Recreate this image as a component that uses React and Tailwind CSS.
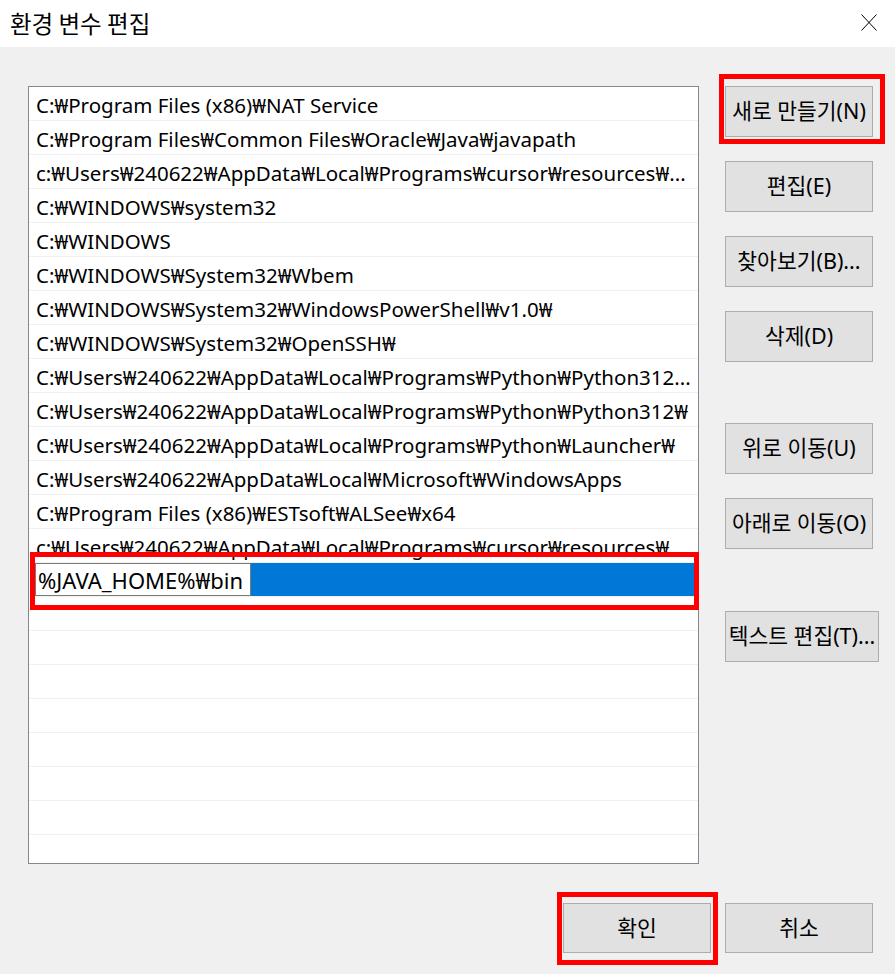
import React from 'react';

const paths = [
  'C:₩Program Files (x86)₩NAT Service',
  'C:₩Program Files₩Common Files₩Oracle₩Java₩javapath',
  'c:₩Users₩240622₩AppData₩Local₩Programs₩cursor₩resources₩...',
  'C:₩WINDOWS₩system32',
  'C:₩WINDOWS',
  'C:₩WINDOWS₩System32₩Wbem',
  'C:₩WINDOWS₩System32₩WindowsPowerShell₩v1.0₩',
  'C:₩WINDOWS₩System32₩OpenSSH₩',
  'C:₩Users₩240622₩AppData₩Local₩Programs₩Python₩Python312...',
  'C:₩Users₩240622₩AppData₩Local₩Programs₩Python₩Python312₩',
  'C:₩Users₩240622₩AppData₩Local₩Programs₩Python₩Launcher₩',
  'C:₩Users₩240622₩AppData₩Local₩Microsoft₩WindowsApps',
  'C:₩Program Files (x86)₩ESTsoft₩ALSee₩x64',
  'c:₩Users₩240622₩AppData₩Local₩Programs₩cursor₩resources₩',
];

const emptyRows = 8;

function Button({ children, wide }) {
  return (
    <div
      className={`h-[51px] ${wide ? 'w-[154px]' : 'w-[148px]'} bg-[#e1e1e1] border border-[#adadad] flex items-center justify-center text-[21.5px] text-black whitespace-nowrap`}
    >
      {children}
    </div>
  );
}

// red annotation box drawn over a button
function Marked({ children, className }) {
  return (
    <div className="relative">
      {children}
      <div className={`absolute border-[5px] border-[#ff0000] pointer-events-none ${className}`} />
    </div>
  );
}

export default function App() {
  return (
    <div
      className="relative w-[895px] h-[974px] bg-[#f0f0f0] flex flex-col text-black overflow-hidden"
      style={{ fontFamily: '"Noto Sans", "Noto Sans CJK KR", sans-serif' }}
    >
      {/* title bar */}
      <div className="h-[47px] bg-white flex items-center justify-between pl-[10px] pr-[18px]">
        <span className="text-[23.5px] leading-none" style={{ fontFamily: '"Noto Sans CJK KR", sans-serif' }}>
          환경 변수 편집
        </span>
        <svg width="16" height="17" viewBox="0 0 16 17" className="mt-[-2px]">
          <path d="M0.5 0.5 L15.5 16.5 M15.5 0.5 L0.5 16.5" stroke="#000" strokeWidth="1" fill="none" />
        </svg>
      </div>

      <div className="flex-1 flex flex-col pt-[39px] pl-[28px]">
        <div className="flex gap-[26px]">
          {/* path list */}
          <div className="w-[671px] h-[778px] bg-white border border-[#828790] overflow-hidden">
            {paths.map((p, i) => (
              <div
                key={i}
                className="h-[34px] border-b border-[#f0f0f0] flex items-center pt-[3px] pl-[7px] pr-[4px] text-[20.5px] whitespace-nowrap overflow-hidden"
              >
                {p}
              </div>
            ))}
            {/* row being edited */}
            <div className="h-[34px] border-b border-[#f0f0f0] flex pl-[6px] pr-[3px]">
              <div className="w-[216px] h-[33px] border border-[#7a7a7a] bg-white flex items-center pt-[2px] pl-[2px] text-[22px] whitespace-nowrap overflow-hidden">
                %JAVA_HOME%₩bin
              </div>
              <div className="flex-1 h-[33px] bg-[#0078d7]" />
            </div>
            {Array.from({ length: emptyRows }).map((_, i) => (
              <div key={i} className="h-[34px] border-b border-[#f0f0f0]" />
            ))}
          </div>

          {/* side buttons */}
          <div className="flex flex-col">
            <Marked className="left-[-6px] right-[-6px] top-[-12px] bottom-[-7px]">
              <Button>새로 만들기(N)</Button>
            </Marked>
            <div className="mt-[24px]"><Button>편집(E)</Button></div>
            <div className="mt-[24px]"><Button>찾아보기(B)...</Button></div>
            <div className="mt-[24px]"><Button>삭제(D)</Button></div>
            <div className="mt-[61px]"><Button>위로 이동(U)</Button></div>
            <div className="mt-[24px]"><Button>아래로 이동(O)</Button></div>
            <div className="mt-[62px]"><Button wide>텍스트 편집(T)...</Button></div>
          </div>
        </div>

        {/* OK / Cancel */}
        <div className="flex justify-end gap-[14px] mt-[39px] pr-[22px]">
          <Marked className="left-[-6px] right-[-7px] top-[-11px] bottom-[-12px]">
            <div className="h-[50px] w-[148px] bg-[#e1e1e1] border border-[#adadad] flex items-center justify-center text-[21.5px]">확인</div>
          </Marked>
          <div className="h-[50px] w-[148px] bg-[#e1e1e1] border border-[#adadad] flex items-center justify-center text-[21.5px]">취소</div>
        </div>
      </div>

      {/* red annotation around the edited row */}
      <div className="absolute left-[30px] top-[552px] w-[669px] h-[58px] border-[5px] border-[#ff0000] pointer-events-none" />
    </div>
  );
}
